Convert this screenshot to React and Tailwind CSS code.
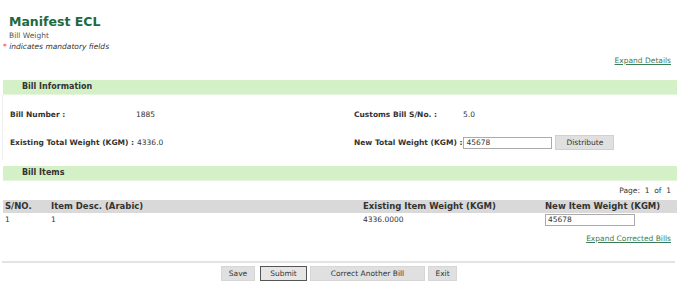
export default function App() {
  return (
    <div className="w-[677px] h-[296px] bg-white overflow-hidden font-['DejaVu_Sans',Verdana,sans-serif] text-[7.5px] text-[#333] leading-none">
      {/* Heading */}
      <div className="pl-[9px] pt-[16px]">
        <h1 className="text-[12.5px] font-bold text-[#1d6a3c] leading-none">Manifest ECL</h1>
        <div className="mt-[3px] text-[#555]">Bill Weight</div>
      </div>
      <div className="pl-[3px] mt-[4px] italic text-[#333]">
        <span className="text-red-500 not-italic">*</span> indicates mandatory fields
      </div>
      <div className="flex justify-end pr-[6px] mt-[6px]">
        <a className="underline text-[#3c7d55]">Expand Details</a>
      </div>

      {/* Bill Information */}
      <div className="ml-[3px] mt-[16px] h-[15px] bg-[#d4f0c6] border-b border-[#e6f5dd] flex items-center pl-[19px] font-bold text-[8px] text-[#333]">
        Bill Information
      </div>
      <div className="ml-[2px] border-l border-[#eee] pt-[15px] pb-[10px]">
        <div className="grid grid-cols-[351px_1fr] items-center h-[10px]">
          <div className="flex pl-[7px]">
            <span className="w-[126px] font-bold">Bill Number :</span>
            <span>1885</span>
          </div>
          <div className="flex">
            <span className="w-[109px] font-bold">Customs Bill S/No. :</span>
            <span>5.0</span>
          </div>
        </div>
        <div className="grid grid-cols-[351px_1fr] items-center mt-[15px]">
          <div className="flex pl-[7px]">
            <span className="font-bold">Existing Total Weight (KGM) :</span>
            <span className="ml-[3px]">4336.0</span>
          </div>
          <div className="flex items-center">
            <span className="font-bold">New Total Weight (KGM) :</span>
            <div className="ml-[1px] w-[89px] h-[12px] border border-[#aaa] bg-white flex items-center pl-[2px]">45678</div>
            <button className="ml-[3px] w-[59px] h-[15px] bg-[#e0e0e0] border border-[#d0d0d0] text-[7.5px]">Distribute</button>
          </div>
        </div>
      </div>

      {/* Bill Items */}
      <div className="ml-[3px] mt-[6px] h-[15px] bg-[#d4f0c6] border-b border-[#e6f5dd] flex items-center pl-[19px] font-bold text-[8px] text-[#333]">
        Bill Items
      </div>
      <div className="flex justify-end pr-[6px] mt-[6px]">Page:&nbsp; 1&nbsp; of&nbsp; 1</div>
      <div className="ml-[3px] mt-[5px]">
        <div className="grid grid-cols-[46px_312px_182px_1fr] h-[13px] items-center bg-[#d9d9d9] font-bold text-[8.5px] text-[#333] pl-[2px]">
          <span>S/NO.</span>
          <span>Item Desc. (Arabic)</span>
          <span>Existing Item Weight (KGM)</span>
          <span>New Item Weight (KGM)</span>
        </div>
        <div className="grid grid-cols-[46px_312px_182px_1fr] items-center pl-[2px] h-[15px]">
          <span>1</span>
          <span>1</span>
          <span>4336.0000</span>
          <div className="w-[90px] h-[12px] border border-[#aaa] bg-white flex items-center pl-[2px]">45678</div>
        </div>
      </div>
      <div className="flex justify-end pr-[6px] mt-[7px]">
        <a className="underline text-[#3c7d55]">Expand Corrected Bills</a>
      </div>

      {/* Footer */}
      <div className="mx-[2px] mt-[19px] border-t-2 border-[#e3e3e3]" />
      <div className="flex justify-center gap-[3px] mt-[3px] pl-[1px]">
        <button className="w-[34px] h-[15px] bg-[#e0e0e0] border border-[#d6d6d6] text-[7.5px]">Save</button>
        <button className="ml-[2px] w-[47px] h-[15px] bg-[#e6e6e6] border border-[#555] text-[7.5px]">Submit</button>
        <button className="w-[115px] h-[15px] bg-[#e0e0e0] border border-[#d6d6d6] text-[7.5px]">Correct Another Bill</button>
        <button className="w-[29px] h-[15px] bg-[#e0e0e0] border border-[#d6d6d6] text-[7.5px]">Exit</button>
      </div>
    </div>
  );
}
